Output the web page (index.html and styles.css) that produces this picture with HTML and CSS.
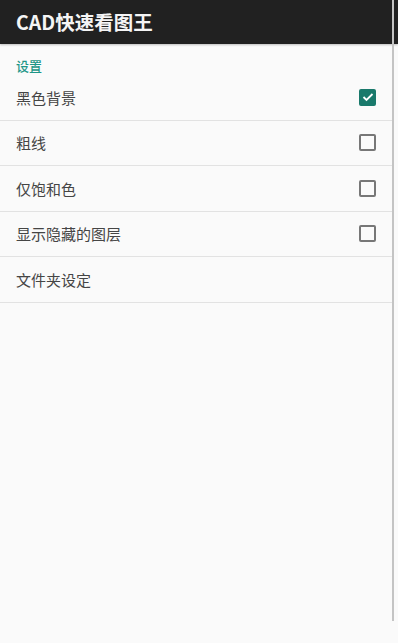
FILE: index.html
```html
<!DOCTYPE html>
<html>
  <head>
    <title>CAD快速看图王</title>
    <link rel="stylesheet" href="styles.css">
  </head>
  <body>
    <div class="toolbar">CAD快速看图王</div>

    <div class="prefs">
      <div class="category">设置</div>

      <div class="pref">
        <span class="pref-title">黑色背景</span>
        <span class="check checked">
          <svg width="12" height="10" viewBox="0 0 12 10">
            <path d="M1.5 5 L4.5 8 L10.5 2" fill="none" stroke="#fff" stroke-width="1.8" />
          </svg>
        </span>
      </div>
      <div class="pref">
        <span class="pref-title">粗线</span>
        <span class="check"></span>
      </div>
      <div class="pref">
        <span class="pref-title">仅饱和色</span>
        <span class="check"></span>
      </div>
      <div class="pref">
        <span class="pref-title">显示隐藏的图层</span>
        <span class="check"></span>
      </div>
      <div class="pref">
        <span class="pref-title">文件夹设定</span>
      </div>
    </div>

    <div class="scrollbar"></div>
  </body>
</html>
```

FILE: styles.css
```css
body {
  margin: 0;
  background-color: #fafafa;
  font-family: "Noto Sans CJK SC", "Noto Sans", sans-serif;
  position: relative;
  height: 643px;
  overflow: hidden;
}
.toolbar {
  height: 44px;
  line-height: 44px;
  padding-left: 16px;
  background-color: #212121;
  color: #f5f5f5;
  font-size: 19.5px;
  font-weight: 700;
  box-shadow: 0 1px 2px rgba(0, 0, 0, 0.25);
}
.prefs {
  width: 393px;
}
.category {
  padding: 13px 16px 0;
  height: 18px;
  line-height: 18px;
  font-size: 13px;
  font-weight: 500;
  color: #1e9687;
}
.pref {
  display: flex;
  align-items: center;
  justify-content: space-between;
  height: 44.5px;
  padding: 0 17px 0 16px;
  border-bottom: 1px solid #e2e2e2;
}
.pref-title {
  font-size: 15px;
  color: #454545;
}
.check {
  width: 13px;
  height: 13px;
  border: 2px solid #777;
  border-radius: 2px;
  display: flex;
  align-items: center;
  justify-content: center;
}
.check.checked {
  background-color: #19796b;
  border-color: #19796b;
}
.scrollbar {
  position: absolute;
  top: 0;
  left: 392px;
  width: 2px;
  height: 621px;
  background-color: #c4c4c4;
}
```
